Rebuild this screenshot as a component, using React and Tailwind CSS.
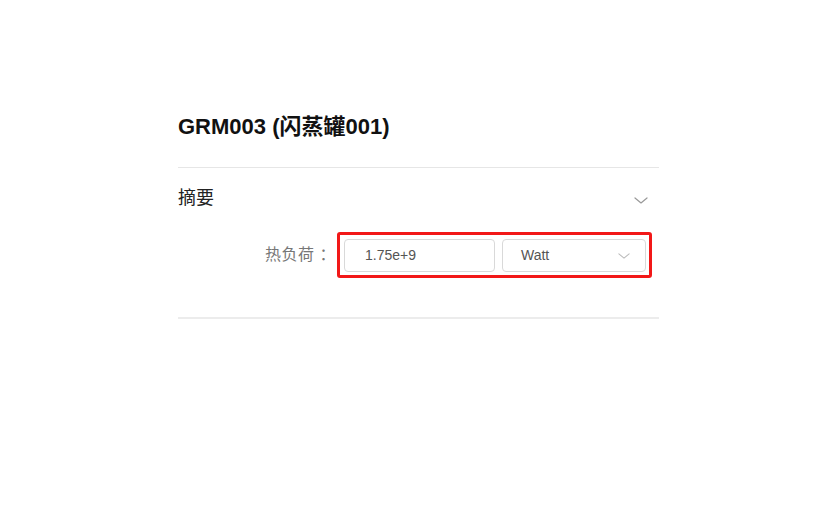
import React from 'react';

const Chevron = ({ className }) => (
  <svg viewBox="0 0 14 7" fill="none" className={className}>
    <path d="M1 1l6 5 6-5" stroke="currentColor" strokeWidth="1.2" strokeLinecap="round" strokeLinejoin="round" />
  </svg>
);

const App = () => {
  return (
    <div className="min-h-[522px] bg-white font-['Liberation_Sans','Noto_Sans_CJK_SC',sans-serif]">
      <div className="ml-[178px] w-[481px] pt-[113px]">
        <h1 className="text-[22px] leading-[28px] font-bold text-[#111]">GRM003 (闪蒸罐001)</h1>

        <div className="mt-[26px] border-t border-[#e6e6e6]" />

        {/* summary section */}
        <div className="flex items-center justify-between pt-[2px] h-[58px]">
          <span className="text-[18px] text-[#222]">摘要</span>
          <Chevron className="w-[14px] h-[7px] mr-[11px] mt-[4px] text-[#999]" />
        </div>

        <div className="flex items-center mt-[6px]">
          <span className="ml-[87px] w-[72px] text-[16px] text-[#777] tracking-[0.5px]">热负荷 ：</span>
          <div className="flex gap-[7px] border-[3px] border-[#f21818] rounded-[3px] pl-[4px] pr-[3px] pt-[4px] pb-[3px]">
            <div className="w-[151px] h-[33px] border border-[#d9d9d9] rounded-[4px] flex items-center pl-[20px] text-[14px] text-[#555]">
              1.75e+9
            </div>
            <div className="w-[144px] h-[33px] border border-[#d9d9d9] rounded-[4px] flex items-center justify-between pl-[18px] pr-[14px] text-[14px] text-[#555]">
              <span>Watt</span>
              <Chevron className="w-[14px] h-[6px] text-[#bbb]" />
            </div>
          </div>
        </div>

        <div className="mt-[39px] border-t-2 border-[#ececec]" />
      </div>
    </div>
  );
};

export default App;
